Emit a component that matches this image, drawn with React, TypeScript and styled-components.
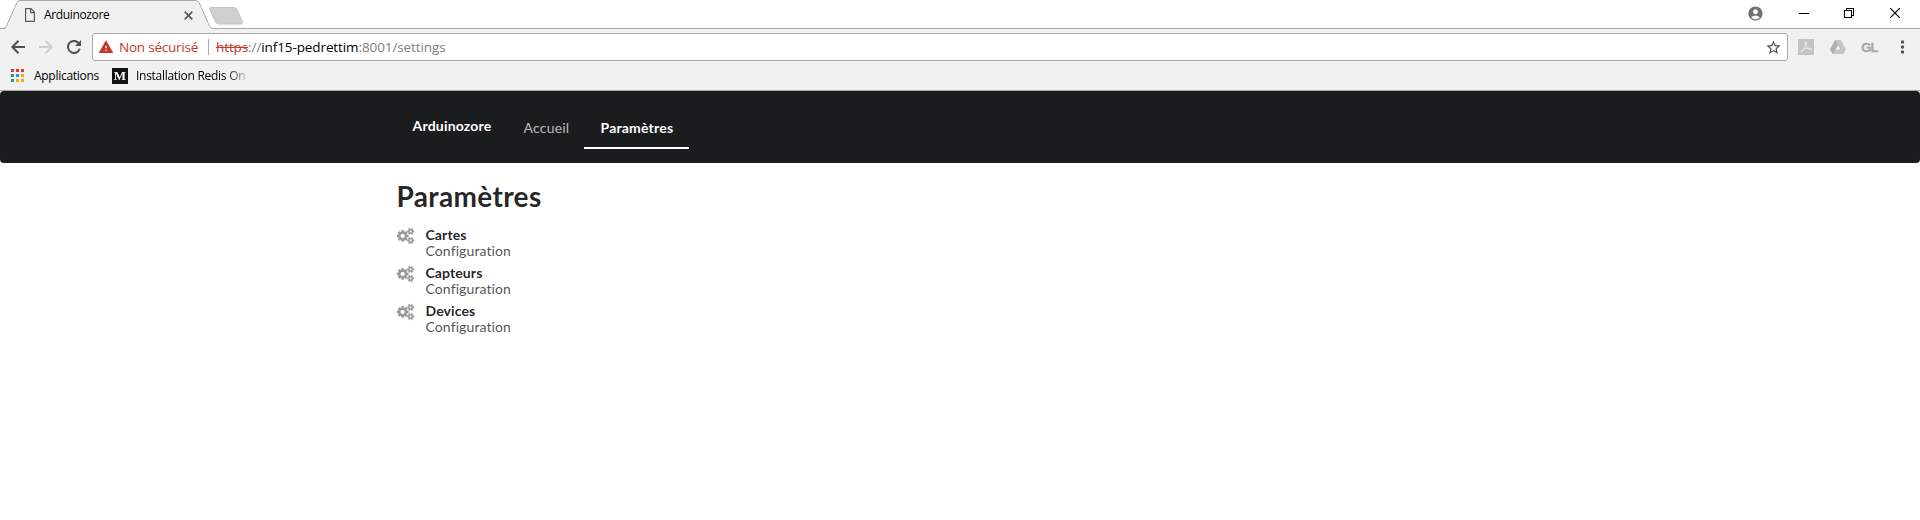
import React from 'react';
import styled, { createGlobalStyle, css } from 'styled-components';
import { MdAccountCircle, MdStarBorder, MdWarning } from 'react-icons/md';

const GlobalStyle = createGlobalStyle`
  * { box-sizing: border-box; }
  html, body { margin: 0; background: #fff; }
  body { overflow: hidden; }
  svg { display: block; flex: none; }
`;

const Browser = styled.div`
  height: 520px;
  font-family: 'Open Sans', 'Noto Sans', sans-serif;
  color: #000;
`;

const TabStrip = styled.div`
  display: flex;
  height: 29px;
  box-shadow: inset 0 -1px #a9a9a9;
`;

const Tab = styled.div`
  position: relative;
  display: flex;
  align-items: center;
  width: 208px;
  height: 29px;
  padding: 1px 15px 0 25px;
`;

const TabShape = styled.svg`
  position: absolute;
  left: 0;
  top: 0;
`;

const TabTitle = styled.span`
  position: relative;
  flex: 1;
  margin-left: 9px;
  font-size: 12px;
  letter-spacing: -0.36px;
  line-height: 16px;
`;

const Above = styled.div`
  position: relative;
`;

const WindowButtons = styled.div`
  display: flex;
  align-items: center;
  gap: 35px;
  height: 26px;
  margin-left: auto;
  padding-right: 20px;
`;

const CloseIcon = styled.svg`
  margin-left: 1px;
`;

const Toolbar = styled.div`
  display: flex;
  align-items: center;
  height: 36px;
  padding: 0 11px 0 4px;
  background: #f1f1f1;
  color: #505050;
`;

const NavButton = styled.div<{ $muted?: boolean }>`
  display: flex;
  justify-content: center;
  width: 28px;
  color: ${p => (p.$muted ? '#cfcfcf' : '#505050')};
`;

const AddressBar = styled.div`
  display: flex;
  align-items: center;
  width: 1696px;
  height: 28px;
  margin-left: 4px;
  padding: 0 5px 0 5px;
  border: 1px solid #a9a9a9;
  border-radius: 3px;
  background: #fff;
  font-size: 13.5px;
  line-height: 20px;
`;

const Security = styled.div`
  display: flex;
  align-items: center;
  gap: 5px;
  width: 111px;
  height: 16px;
  color: #c0392b;
  border-right: 1px solid #a9a9a9;
  letter-spacing: -0.22px;
  white-space: nowrap;
`;

const Url = styled.div`
  flex: 1;
  padding-left: 7px;
  color: #808080;
  letter-spacing: -0.1px;
`;

const Scheme = styled.s`
  color: #c0392b;
`;

const Host = styled.span`
  color: #000;
`;

const Extensions = styled.div`
  display: flex;
  align-items: center;
  justify-content: space-between;
  flex: 1;
  padding-left: 10px;
`;

const GlExtension = styled.span`
  font: bold 13px 'Liberation Sans', sans-serif;
  letter-spacing: -1px;
  color: #a8a8a8;
  -webkit-text-stroke: 0.3px #a8a8a8;
`;

const Bookmarks = styled.div`
  display: flex;
  align-items: center;
  height: 26px;
  padding: 0 0 4px 11px;
  border-bottom: 1px solid #a3aaa6;
  background: #f1f1f1;
  font-size: 12px;
  line-height: 16px;
`;

const Bookmark = styled.div<{ $fade?: boolean }>`
  display: flex;
  align-items: center;
  white-space: nowrap;
  ${p =>
    p.$fade
      ? css`
          width: 139px;
          gap: 8px;
          letter-spacing: -0.28px;
          -webkit-mask-image: linear-gradient(to right, #000 115px, transparent 139px);
          mask-image: linear-gradient(to right, #000 115px, transparent 139px);
        `
      : css`
          width: 101px;
          gap: 10px;
          letter-spacing: -0.28px;
        `}
`;

const MediumLogo = styled.span`
  flex: none;
  width: 16px;
  height: 16px;
  background: #111;
  color: #fff;
  font: bold 13px/16px 'Liberation Serif', serif;
  letter-spacing: 0;
  text-align: center;
`;

const Menu = styled.nav`
  display: flex;
  height: 72px;
  padding-left: 396px;
  border-radius: 4px;
  background: #1b1c1d;
  font-family: Lato, sans-serif;
  font-size: 14px;
  line-height: 14px;
  letter-spacing: 0.2px;
`;

const Brand = styled.div`
  padding: 28px 0 0 16.5px;
  width: 111px;
  color: #fff;
  font-weight: 700;
`;

const MenuItem = styled.a<{ $active?: boolean }>`
  height: 58px;
  padding: 30px 0 0 16.5px;
  border-bottom: 2px solid ${p => (p.$active ? '#fff' : 'transparent')};
  color: ${p => (p.$active ? '#fff' : 'rgba(255,255,255,.7)')};
  font-weight: ${p => (p.$active ? 700 : 400)};
  width: ${p => (p.$active ? '105px' : '77px')};
`;

const Page = styled.main`
  padding: 15px 0 0 396px;
  font-family: Lato, sans-serif;
  color: rgba(0, 0, 0, 0.87);
`;

const Title = styled.h1`
  margin: 0 0 13px 0.5px;
  font-size: 28px;
  line-height: 36px;
  font-weight: 700;
  letter-spacing: 0.35px;
`;

const Entry = styled.div`
  display: flex;
  height: 38px;
  padding-left: 1px;
  font-size: 14px;
  line-height: 16px;
`;

const EntryIcon = styled.div`
  width: 28.5px;
  padding-top: 0.5px;
  color: #999;
`;

const EntryName = styled.div`
  font-weight: 700;
  letter-spacing: 0.1px;
`;

const EntryText = styled.div`
  color: rgba(0, 0, 0, 0.7);
  letter-spacing: 0.1px;
`;

const appColors = ['#e53935', '#e53935', '#e53935', '#34a065', '#2196f3', '#f9ab00', '#34a065', '#f9ab00', '#f9ab00'];

const AppsIcon = () => (
  <svg width="13" height="13" shapeRendering="crispEdges">
    {appColors.map((c, i) => (
      <rect key={i} x={(i % 3) * 5} y={Math.floor(i / 3) * 5} width="3" height="3" fill={c} />
    ))}
  </svg>
);

const smallGear =
  'v140q0 16-149 31-12 27-30 52 51 113 51 138 0 4-4 7-122 71-124 71-8 0-46-47t-52-68q-20 2-30 2t-30-2q-14 21-52 68t-46 47q-2 0-124-71-4-3-4-7 0-25 51-138-18-25-30-52-149-15-149-31v-140q0-16 149-31 13-29 30-52-51-113-51-138 0-4 4-7 4-2 35-20t59-34 30-16q8 0 46 46.500t52 67.500q20-2 30-2t30 2q51-71 92-112l6-2q4 0 124 70 4 3 4 7 0 25-51 138 17 23 30 52 149 15 149 31z';

const CogsIcon = () => (
  <svg width="17" height="15.900" viewBox="0 0 1920 1792" fill="currentColor" fillRule="evenodd" stroke="currentColor" strokeWidth="45" overflow="visible">
    <path d="M896 896q0-106-75-181t-181-75-181 75-75 181 75 181 181 75 181-75 75-181zm384-91v185q0 10-7 19.500t-16 10.500l-155 24q-11 35-32 76 34 48 90 115 7 11 7 20 0 12-7 19-23 30-82.500 89.500t-78.500 59.500q-11 0-21-7l-115-90q-37 19-77 31-11 108-23 155-7 24-30 24h-186q-11 0-20-7.500t-10-17.500l-23-153q-34-10-75-31l-118 89q-7 7-20 7-11 0-21-8-144-133-144-160 0-9 7-19 10-14 41-53t47-61q-23-44-35-82l-152-24q-10-1-17-9.500t-7-19.500v-185q0-10 7-19.500t16-10.500l155-24q11-35 32-76-34-48-90-115-7-11-7-20 0-12 7-20 22-30 82-89t79-59q11 0 21 7l115 90q34-18 77-32 11-108 23-154 7-24 30-24h186q11 0 20 7.500t10 17.500l23 153q34 10 75 31l118-89q8-7 20-7 11 0 21 8 144 133 144 160 0 8-7 19-12 16-42 54t-45 60q23 48 34 82l152 23q10 2 17 10.500t7 19.500z" />
    <path d={`M1664 1408a128 128 0 1 0-256 0a128 128 0 1 0 256 0zM1920 1338${smallGear}`} />
    <path d={`M1664 384a128 128 0 1 0-256 0a128 128 0 1 0 256 0zM1920 314${smallGear}`} />
  </svg>
);

const ArrowIcon = ({ forward }: { forward?: boolean }) => (
  <svg width="14" height="14" fill="none" stroke="currentColor" strokeWidth="2">
    <path d={forward ? 'M0 7H12M6.500 .8L12.700 7L6.500 13.200' : 'M14 7H2M7.500 .8L1.300 7L7.500 13.200'} />
  </svg>
);

export default function App() {
  return (
    <Browser>
      <GlobalStyle />
      <TabStrip>
        <Tab>
          <TabShape width="245" height="29">
            <path d="M5.500 29 L17 2.500 Q18 .5 20 .5 H195 Q198 .5 199 2.500 L209.500 26 Q210.500 28.500 213 28.500 V29Z" fill="#f1f1f1" />
            <path d="M0 28.500 H3 Q5.500 28.500 6.500 26 L17 2.500 Q18 .5 20 .5 H195 Q198 .5 199 2.500 L209.500 26 Q210.500 28.500 213 28.500" fill="none" stroke="#a9a9a9" />
            <path d="M211 7.500 H234 Q236 7.500 237 9.500 L242.500 22 Q243 24 241 24 H219 Q216.500 24 215.500 22 L209.500 9 Q209 7.500 211 7.500Z" fill="#cfcfcf" stroke="#c4c4c4" />
          </TabShape>
          <Above>
            <svg width="10" height="14" fill="none" stroke="#5a5a5a" strokeWidth="1.2">
              <path d="M.6 .6 H6 L9.400 4.200 V13.400 H.6Z M5.700 .6 V4.600 H9.400" />
            </svg>
          </Above>
          <TabTitle>Arduinozore</TabTitle>
          <Above>
            <svg width="9" height="9" stroke="#5a5a5a" strokeWidth="1.700">
              <path d="M.7 .7 L8.300 8.300 M8.300 .7 L.7 8.300" />
            </svg>
          </Above>
        </Tab>
        <WindowButtons>
          <MdAccountCircle size={17} color="#707070" />
          <svg width="10" height="10" shapeRendering="crispEdges">
            <rect y="5" width="10" height="1" />
          </svg>
          <svg width="10" height="10" fill="none" stroke="#000" shapeRendering="crispEdges">
            <path d="M.5 2.500 H7.500 V9.500 H.5Z M2.500 2.500 V.5 H9.500 V7.500 H7.500" />
          </svg>
          <CloseIcon width="10" height="10" stroke="#000" strokeWidth="1.200">
            <path d="M0 0 L10 10 M10 0 L0 10" />
          </CloseIcon>
        </WindowButtons>
      </TabStrip>
      <Toolbar>
        <NavButton>
          <ArrowIcon />
        </NavButton>
        <NavButton $muted>
          <ArrowIcon forward />
        </NavButton>
        <NavButton>
          <svg width="14" height="14">
            <path d="M11.500 3 A6 6 0 1 0 12.700 8.700" fill="none" stroke="currentColor" strokeWidth="2" />
            <path d="M14 0 V6 H8Z" fill="currentColor" />
          </svg>
        </NavButton>
        <AddressBar>
          <Security>
            <MdWarning size={16} />
            Non sécurisé
          </Security>
          <Url>
            <Scheme>https</Scheme>://<Host>inf15-pedrettim</Host>:8001/settings
          </Url>
          <MdStarBorder size={17} />
        </AddressBar>
        <Extensions>
          <svg width="16" height="16">
            <rect width="16" height="16" fill="#c4c4c4" />
            <path d="M7.500 2.500 C6.500 3 8 7 9.500 9 C11 11 13.500 11 13.300 9.800 C13 8.700 8 9.300 5 10.800 C2 12.300 2.500 13.600 3.500 13 C5.500 12 8 6.500 8.300 4 C8.400 3 8 2.300 7.500 2.500Z" fill="none" stroke="#eee" />
          </svg>
          <svg width="16" height="14">
            <path d="M5.300 0 H10.700 L16 9.200 L13.300 14 H2.700 L0 9.200Z" fill="#c6c6c6" />
            <path d="M5.300 0 L8 4.700 L2.700 14 L0 9.200Z" fill="#b0b0b0" />
            <path d="M8 5.500 L10.300 9.500 H5.700Z" fill="#f1f1f1" />
          </svg>
          <GlExtension>GL</GlExtension>
          <svg width="16" height="14" fill="#505050">
            <circle cx="9.500" cy="2" r="1.700" />
            <circle cx="9.500" cy="7" r="1.700" />
            <circle cx="9.500" cy="12" r="1.700" />
          </svg>
        </Extensions>
      </Toolbar>
      <Bookmarks>
        <Bookmark>
          <AppsIcon />
          Applications
        </Bookmark>
        <Bookmark $fade>
          <MediumLogo>M</MediumLogo>
          Installation Redis On
        </Bookmark>
      </Bookmarks>
      <Menu>
        <Brand>Arduinozore</Brand>
        <MenuItem>Accueil</MenuItem>
        <MenuItem $active>Paramètres</MenuItem>
      </Menu>
      <Page>
        <Title>Paramètres</Title>
        {['Cartes', 'Capteurs', 'Devices'].map(name => (
          <Entry key={name}>
            <EntryIcon>
              <CogsIcon />
            </EntryIcon>
            <div>
              <EntryName>{name}</EntryName>
              <EntryText>Configuration</EntryText>
            </div>
          </Entry>
        ))}
      </Page>
    </Browser>
  );
}
